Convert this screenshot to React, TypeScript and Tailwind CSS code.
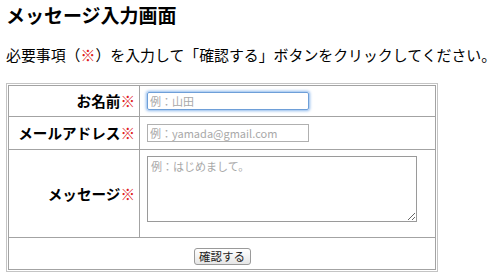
import React from 'react';

const jp = { fontFamily: '"Noto Sans CJK JP", "Noto Sans", sans-serif' };

export default function App() {
  return (
    <div className="min-h-screen bg-white pl-[6px] pt-[4px] text-black" style={jp}>
      <h1 className="text-[19px] font-bold leading-[22px]">メッセージ入力画面</h1>
      <p className="mt-[19px] whitespace-nowrap text-[14.9px] leading-[20px]">
        必要事項（<span className="text-[#e0201b]">※</span>）を入力して「確認する」ボタンをクリックしてください。
      </p>

      <div className="mt-[18px] w-[432px] border border-[#c4c4c4] p-px">
        <table className="w-full border-collapse">
          <tbody>
            <tr className="h-[31px]">
              <th className="w-[131px] border border-[#a3a3a3] pr-[4px] text-right text-[14.6px] font-bold">
                お名前<span className="text-[#e0201b]">※</span>
              </th>
              <td className="border border-[#a3a3a3] pl-[7px]">
                <input
                  type="text"
                  placeholder="例：山田"
                  className="block h-[18px] w-[162px] rounded-[2px] border border-[#6e9fd8] px-[2px] text-[11px] shadow-[0_0_3px_1px_#8cb8ec] outline-none placeholder:text-[#a8a8a8]"
                />
              </td>
            </tr>
            <tr className="h-[33px]">
              <th className="border border-[#a3a3a3] pr-[4px] text-right text-[14.6px] font-bold">
                メールアドレス<span className="text-[#e0201b]">※</span>
              </th>
              <td className="border border-[#a3a3a3] pl-[7px]">
                <input
                  type="text"
                  placeholder="例：yamada@gmail.com"
                  className="block h-[18px] w-[162px] border border-[#b0b0b0] px-[2px] text-[11px] outline-none placeholder:text-[#a8a8a8]"
                />
              </td>
            </tr>
            <tr className="h-[88px]">
              <th className="border border-[#a3a3a3] pr-[4px] text-right text-[14.6px] font-bold">
                メッセージ<span className="text-[#e0201b]">※</span>
              </th>
              <td className="border border-[#a3a3a3] pl-[7px] pt-[6px] align-top">
                <textarea
                  placeholder="例：はじめまして。"
                  className="block h-[66px] w-[270px] border border-[#9a9a9a] px-[3px] py-[1px] text-[11px] outline-none placeholder:text-[#a8a8a8]"
                />
              </td>
            </tr>
            <tr className="h-[32px]">
              <td colSpan={2} className="border border-[#a3a3a3] text-center">
                <button
                  type="button"
                  className="inline-block h-[17px] w-[57px] rounded-[3px] border border-[#9a9a9a] bg-gradient-to-b from-white to-[#e6e6e6] text-[11.5px] leading-[15px] text-[#222]"
                >
                  確認する
                </button>
              </td>
            </tr>
          </tbody>
        </table>
      </div>
    </div>
  );
}
